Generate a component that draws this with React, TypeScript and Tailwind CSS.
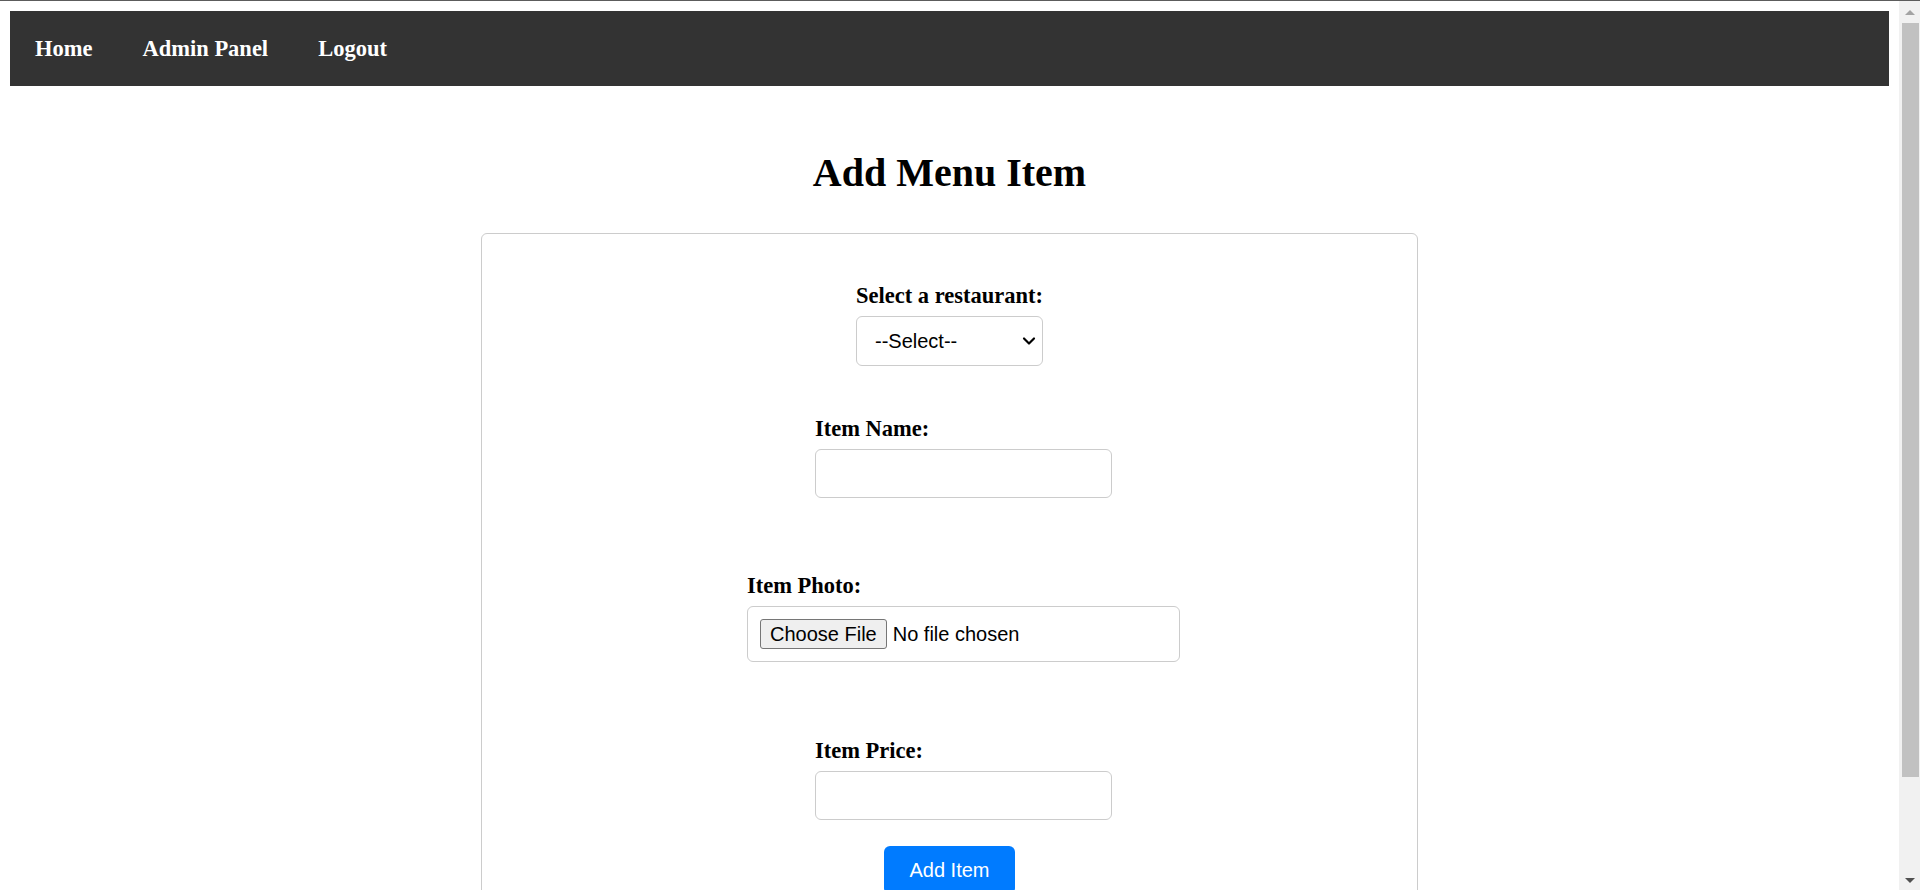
import { ChevronDown } from 'lucide-react'

const serif = "font-['Liberation_Serif','Times_New_Roman',serif]"
const sans = "font-['Liberation_Sans',Arial,sans-serif]"

const NAV_ITEMS = ['Home', 'Admin Panel', 'Logout']

function Label({ children }: { children: React.ReactNode }) {
  return (
    <label className={`${serif} block text-[22.5px] font-bold leading-[26px] text-black mb-[7px]`}>
      {children}
    </label>
  )
}

function TextInput() {
  return (
    <input
      type="text"
      className="block w-[297px] h-[49px] border border-[#cccccc] rounded-[6px] bg-white outline-none"
    />
  )
}

function Scrollbar() {
  return (
    <div className="w-[21px] shrink-0 bg-[#f1f1f1] flex flex-col items-center">
      <div className="h-[22px] w-full flex items-center justify-center">
        <div className="w-0 h-0 border-l-[5px] border-r-[5px] border-b-[5px] border-l-transparent border-r-transparent border-b-[#a3a3a3]" />
      </div>
      <div className="w-[17px] ml-[1px] h-[754px] bg-[#c1c1c1]" />
      <div className="flex-1" />
      <div className="h-[20px] w-full flex items-center justify-center">
        <div className="w-0 h-0 border-l-[5px] border-r-[5px] border-t-[5px] border-l-transparent border-r-transparent border-t-[#505050]" />
      </div>
    </div>
  )
}

export default function App() {
  return (
    <div className="h-[890px] w-[1920px] overflow-hidden bg-white flex flex-col">
      <div className="h-px bg-[#5c5c5c] shrink-0" />
      <div className="flex flex-1 min-h-0">
        <main className="flex-1 px-[10px] pt-[10px]">
          {/* Nav */}
          <nav className="h-[75px] bg-[#333333] flex items-center pl-[25px] gap-[50px]">
            {NAV_ITEMS.map(item => (
              <a key={item} className={`${serif} text-[22.5px] font-bold leading-[26px] text-white`}>
                {item}
              </a>
            ))}
          </nav>

          <h1 className={`${serif} text-center text-[40px] font-bold leading-[46px] text-black mt-[64px]`}>
            Add Menu Item
          </h1>

          {/* Form card */}
          <div className="mx-auto mt-[37px] w-[937px] h-[700px] border border-[#cccccc] rounded-[6px] flex flex-col items-center pt-[49px]">
            <div>
              <Label>Select a restaurant:</Label>
              <div
                role="combobox"
                className="w-[187px] h-[50px] border border-[#cccccc] rounded-[6px] bg-white flex items-center justify-between"
              >
                <span className={`${sans} ml-[18px] text-[20px] leading-[23px] text-black`}>--Select--</span>
                <ChevronDown className="mr-[3px] w-[20px] h-[20px] text-black" strokeWidth={2.6} />
              </div>
            </div>

            <div className="ml-[28px] mt-[50px]">
              <Label>Item Name:</Label>
              <TextInput />
            </div>

            <div className="ml-[28px] mt-[75px]">
              <Label>Item Photo:</Label>
              <div className="w-[433px] h-[56px] border border-[#cccccc] rounded-[6px] flex items-center pl-[12px]">
                <span className="h-[30px] px-[9px] border border-[#767676] rounded-[3px] bg-[#efefef] flex items-center">
                  <span className={`${sans} text-[20px] leading-[23px] text-black`}>Choose File</span>
                </span>
                <span className={`${sans} text-[20px] leading-[23px] text-black ml-[6px]`}>No file chosen</span>
              </div>
            </div>

            <div className="ml-[28px] mt-[76px]">
              <Label>Item Price:</Label>
              <TextInput />
            </div>

            <button
              className={`${sans} mt-[26px] h-[48px] w-[131px] rounded-[6px] bg-[#007bff] text-white text-[20px] leading-[23px]`}
            >
              Add Item
            </button>
          </div>
        </main>
        <Scrollbar />
      </div>
    </div>
  )
}
